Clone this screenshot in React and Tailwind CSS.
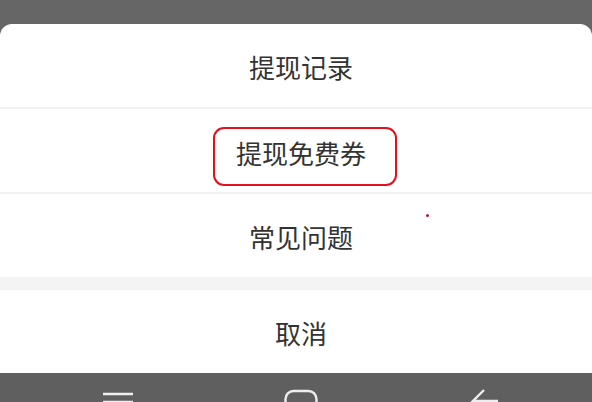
const font = { fontFamily: '"Noto Sans CJK SC", "Noto Sans", sans-serif' };

function Row({ children, boxed = false }) {
  return (
    <div className="flex h-[83px] items-center justify-center">
      {boxed ? (
        <span className="ml-[18px] mt-[12px] flex h-[59px] w-[184px] items-center justify-center rounded-[11px] border-2 border-[#e3101c] pb-[9px] pr-[8px] text-[26px] text-[#333]">
          {children}
        </span>
      ) : (
        <span className="ml-[10px] mt-[1px] text-[26px] text-[#333]">{children}</span>
      )}
    </div>
  );
}

export default function App() {
  return (
    <div className="flex h-[402px] w-[592px] flex-col overflow-hidden bg-[#666]" style={font}>
      <div className="h-[24px] shrink-0" />
      <div className="relative flex flex-1 flex-col overflow-hidden rounded-t-[12px] bg-white">
        <Row>提现记录</Row>
        <div className="h-[2px] bg-[#f2f2f2]" />
        <Row boxed>提现免费券</Row>
        <div className="h-[2px] bg-[#f2f2f2]" />
        <Row>常见问题</Row>
        <div className="h-[13px] bg-[#f4f4f4]" />
        <Row>取消</Row>
        <span className="absolute left-[426px] top-[190px] h-[3px] w-[3px] rounded-full bg-[#d0102a]" />
      </div>
      <div className="flex h-[29px] shrink-0 items-start bg-[#5f5f5f] pl-[103px] pt-[16px]">
        <svg width="30" height="13" viewBox="0 0 30 13" className="mt-[3px]">
          <path d="M0 2h30M0 10h30" stroke="#eee" strokeWidth="2.4" fill="none" />
        </svg>
        <svg width="34" height="13" viewBox="0 0 34 13" className="ml-[151px]">
          <path d="M1.5 13V10a8 8 0 0 1 8-8h15a8 8 0 0 1 8 8v3" stroke="#eee" strokeWidth="2.4" fill="none" />
        </svg>
        <svg width="32" height="13" viewBox="0 0 32 13" className="ml-[150px]">
          <path d="M16 1L5 12h25" stroke="#eee" strokeWidth="2.4" fill="none" />
        </svg>
      </div>
    </div>
  );
}
